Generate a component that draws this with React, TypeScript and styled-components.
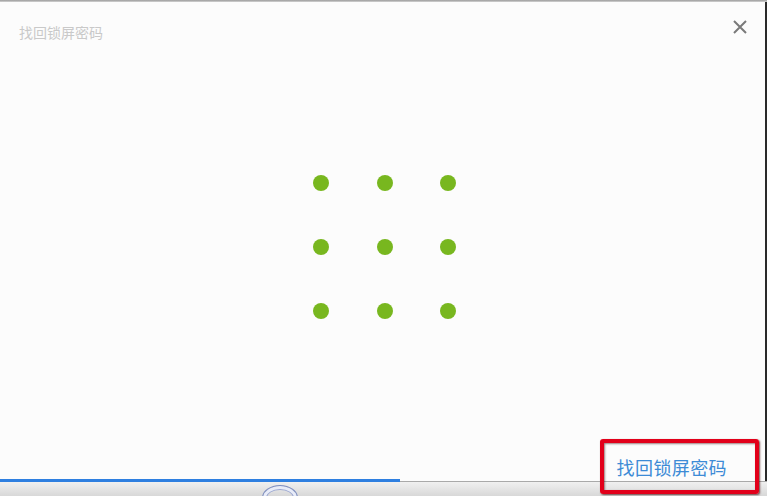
import React from 'react';
import styled, { createGlobalStyle } from 'styled-components';

const GlobalStyle = createGlobalStyle`
  html, body {
    margin: 0;
    padding: 0;
    background: #fcfcfc;
  }
  body {
    font-family: "Microsoft YaHei", "Noto Sans CJK SC", "Liberation Sans", sans-serif;
  }
`;

const Screen = styled.div`
  position: relative;
  width: 767px;
  height: 496px;
  display: flex;
  flex-direction: column;
  overflow: hidden;
  background: #fcfcfc;
`;

const TopEdge = styled.div`
  height: 2px;
  background: linear-gradient(#9a9a9a, #d4d4d4);
`;

const Dialog = styled.div`
  flex: 1;
  display: flex;
  flex-direction: column;
  border-right: 2px solid #2a2a2a;
  background: #fcfcfc;
`;

const Header = styled.div`
  display: flex;
  justify-content: space-between;
  align-items: center;
  padding: 13px 17px 0 19px;
  height: 24px;
`;

const Title = styled.div`
  font-size: 14px;
  color: #c9c9c9;
  margin-top: 10px;
`;

const Close = styled.div`
  width: 16px;
  height: 16px;
  display: flex;
  align-items: center;
  justify-content: center;
`;

const Body = styled.div`
  flex: 1;
  display: flex;
  justify-content: center;
  align-items: flex-start;
  padding-top: 136px;
  padding-left: 4px;
`;

const Grid = styled.div`
  display: grid;
  grid-template-columns: repeat(3, 16px);
  grid-auto-rows: 16px;
  column-gap: 47.5px;
  row-gap: 48px;
`;

const Dot = styled.div`
  width: 16px;
  height: 16px;
  border-radius: 50%;
  background: #78b71f;
`;

const Footer = styled.div`
  display: flex;
  justify-content: flex-end;
  padding: 0 38px 1px 0;
`;

const Link = styled.a`
  font-size: 18px;
  color: #3d8bd6;
  text-decoration: none;
  letter-spacing: 0.4px;
`;

const Taskbar = styled.div`
  height: 14px;
  border-top: 1px solid #a9a9a9;
  background: linear-gradient(#f0f0f0, #d8d8d8);
  position: relative;
`;

const Progress = styled.div`
  position: absolute;
  left: 0;
  top: -3px;
  height: 3px;
  background: #2e7fe0;
`;

const StartOrb = styled.div`
  position: absolute;
  left: 262px;
  top: 3px;
  width: 34px;
  height: 24px;
  border-radius: 50%;
  border: 1px solid #8090c0;
  box-shadow: inset 0 0 0 3px #e8ecf8, inset 0 0 0 4px #9aa6d0;
`;

const Annotation = styled.div`
  position: absolute;
  left: 600px;
  top: 439px;
  width: 151px;
  height: 47px;
  border: 4px solid #e2001a;
  border-radius: 3px;
  box-shadow: 1px 1px 2px rgba(60, 0, 0, 0.7), inset 1px 1px 2px rgba(60, 0, 0, 0.5);
  pointer-events: none;
`;

const App: React.FC = () => {
  return (
    <>
      <GlobalStyle />
      <Screen>
        <TopEdge />
        <Dialog>
          <Header>
            <Title>找回锁屏密码</Title>
            <Close>
              <svg width="14" height="14" viewBox="0 0 14 14">
                <path d="M1 1 L13 13 M13 1 L1 13" stroke="#7a7a7a" strokeWidth="2" />
              </svg>
            </Close>
          </Header>
          <Body>
            <Grid>
              {Array.from({ length: 9 }).map((_, i) => (
                <Dot key={i} />
              ))}
            </Grid>
          </Body>
          <Footer>
            <Link href="#">找回锁屏密码</Link>
          </Footer>
        </Dialog>
        <Taskbar>
          <Progress style={{ width: '400px' }} />
          <StartOrb />
        </Taskbar>
        <Annotation />
      </Screen>
    </>
  );
};

export default App;
